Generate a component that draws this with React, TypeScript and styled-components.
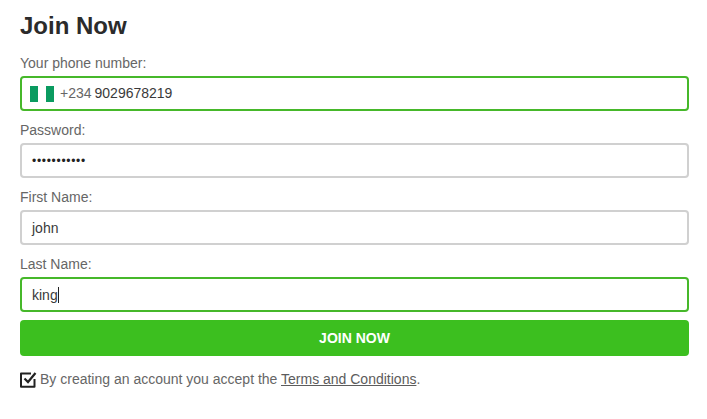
import styled, { createGlobalStyle } from 'styled-components';

const GlobalStyle = createGlobalStyle`
  body {
    margin: 0;
    background: #fff;
    font-family: "Liberation Sans", Arial, sans-serif;
  }
`;

const Form = styled.form`
  width: 669px;
  padding: 12px 18px 0 20px;
`;

const Title = styled.h1`
  margin: 0 0 15px;
  font-size: 24px;
  line-height: 28px;
  font-weight: 700;
  color: #2b2b2b;
`;

const Label = styled.div`
  font-size: 14px;
  line-height: 16px;
  color: #666;
  margin-bottom: 5px;
`;

const Field = styled.div`
  margin-bottom: 11px;
`;

const InputBox = styled.div<{ $active?: boolean }>`
  box-sizing: border-box;
  height: 35px;
  display: flex;
  align-items: center;
  padding: 0 10px;
  border: 2px solid ${(p) => (p.$active ? '#46b82a' : '#d0d0d0')};
  border-radius: 4px;
  font-size: 14px;
  color: #3a3a3a;
`;

const Flag = styled.span`
  display: flex;
  width: 24px;
  height: 16px;
  margin: 0 6px 0 -2px;
`;

const FlagBand = styled.span<{ $color: string }>`
  flex: 1;
  background: ${(p) => p.$color};
`;

const PhoneText = styled.span`
  margin-bottom: 2px;
`;

const Prefix = styled.span`
  color: #666;
  margin-right: 3px;
`;

const Dots = styled.span`
  font-size: 12px;
  letter-spacing: 0.7px;
  color: #222;
`;

const Caret = styled.span`
  display: inline-block;
  width: 1px;
  height: 16px;
  background: #222;
`;

const SubmitButton = styled.button`
  display: block;
  width: 100%;
  height: 36px;
  margin-top: -3px;
  border: 0;
  border-radius: 4px;
  background: #3cbf1f;
  color: #fff;
  font-family: inherit;
  font-size: 14px;
  font-weight: 700;
`;

const Terms = styled.div`
  display: flex;
  align-items: center;
  margin-top: 14px;
  font-size: 14px;
  line-height: 18px;
  color: #666;
`;

const TermsLink = styled.a`
  color: #5c5c5c;
  text-decoration: underline;
`;

const CheckIcon = styled.svg`
  margin-right: 3px;
`;

const App = () => (
  <>
    <GlobalStyle />
    <Form>
      <Title>Join Now</Title>
      <Field>
        <Label>Your phone number:</Label>
        <InputBox $active>
          <Flag>
            <FlagBand $color="#0a9b60" />
            <FlagBand $color="#fff" />
            <FlagBand $color="#0a9b60" />
          </Flag>
          <PhoneText>
            <Prefix>+234</Prefix>
            9029678219
          </PhoneText>
        </InputBox>
      </Field>
      <Field>
        <Label>Password:</Label>
        <InputBox>
          <Dots>•••••••••••</Dots>
        </InputBox>
      </Field>
      <Field>
        <Label>First Name:</Label>
        <InputBox>john</InputBox>
      </Field>
      <Field>
        <Label>Last Name:</Label>
        <InputBox $active>
          king
          <Caret />
        </InputBox>
      </Field>
      <SubmitButton type="button">JOIN NOW</SubmitButton>
      <Terms>
        <CheckIcon width="17" height="18" viewBox="0 0 17 18" fill="none">
          <path d="M14.5 9V16.8H1V3.5H11" stroke="#222" strokeWidth="2" strokeLinejoin="round" />
          <path d="M4.5 8.5L8 12L15.5 3" stroke="#222" strokeWidth="2.2" />
        </CheckIcon>
        <span>
          By creating an account you accept the <TermsLink>Terms and Conditions</TermsLink>.
        </span>
      </Terms>
    </Form>
  </>
);

export default App;
